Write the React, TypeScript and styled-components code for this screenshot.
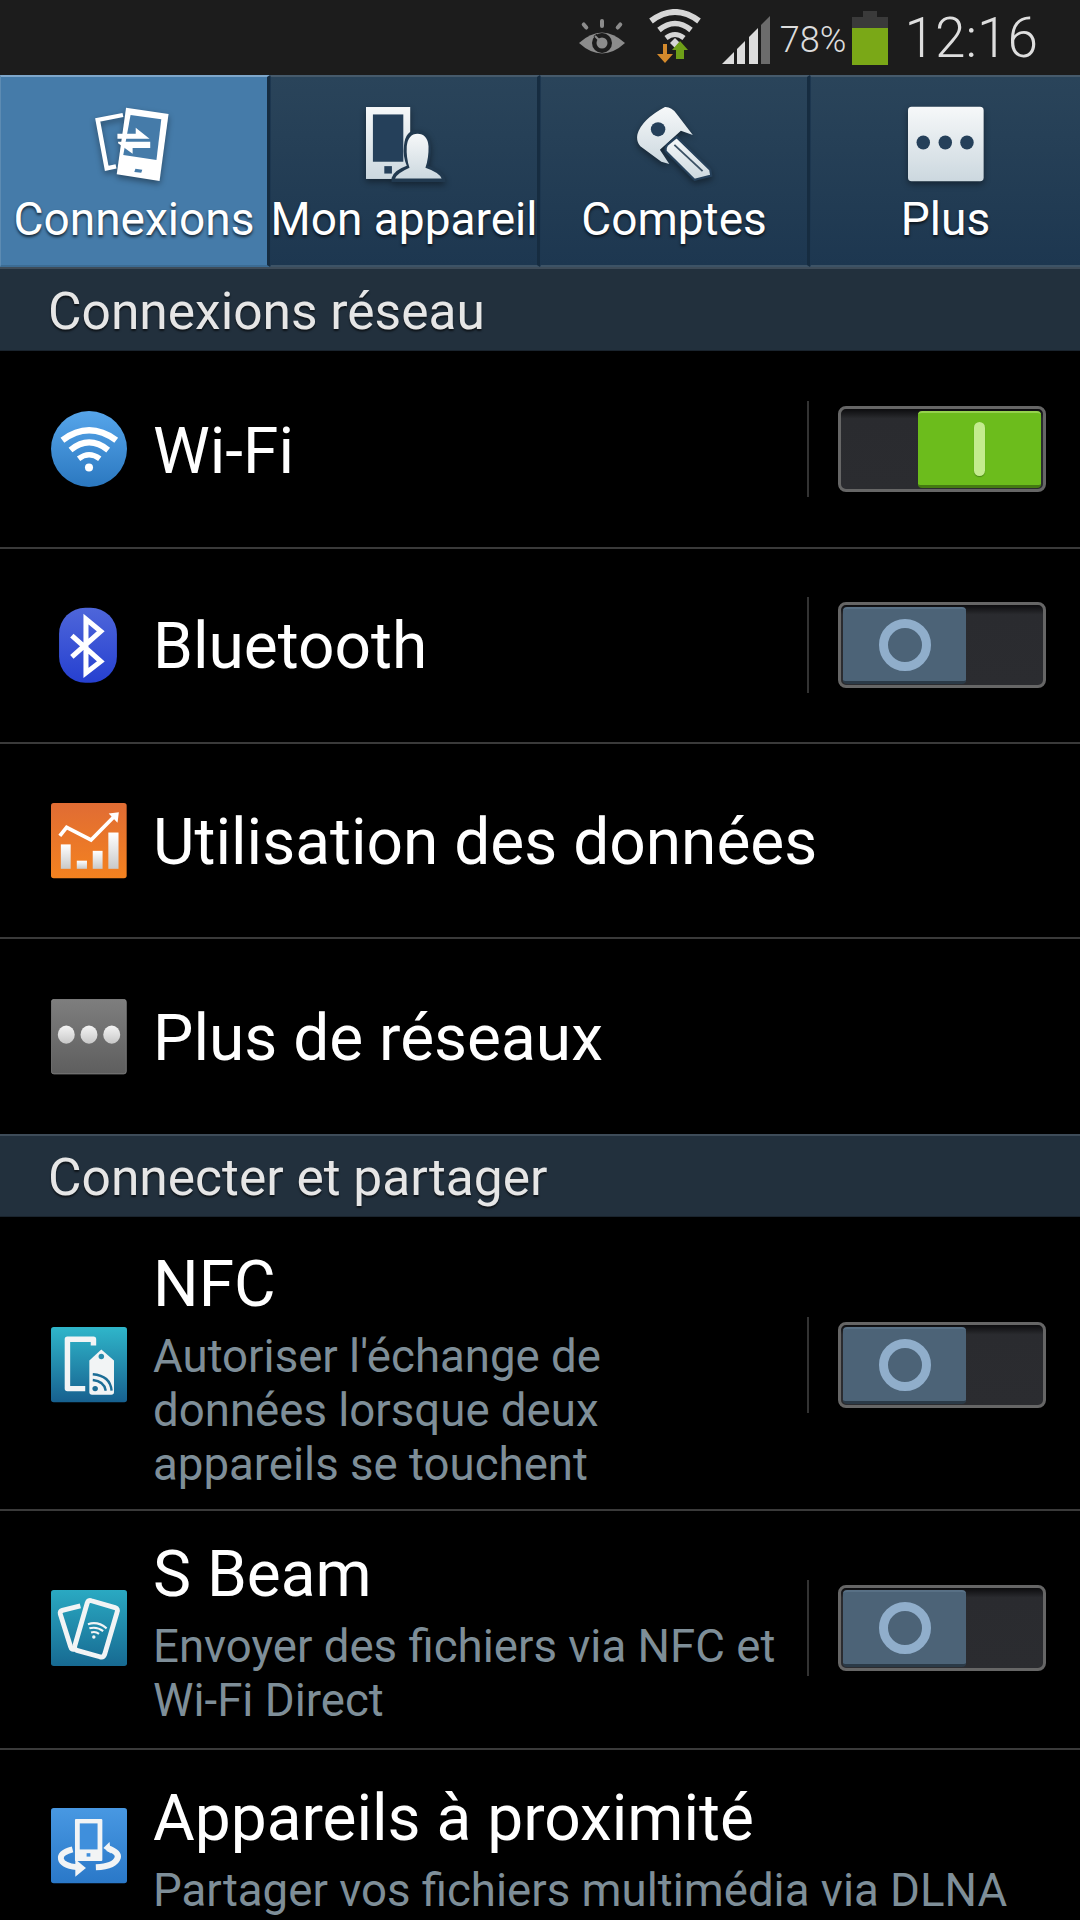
import React from 'react';
import styled, { createGlobalStyle } from 'styled-components';

const GlobalStyle = createGlobalStyle`
    html, body {
        margin: 0;
        padding: 0;
        background: #000;
    }
    * {
        box-sizing: border-box;
    }
`;

const tabs = [
    { label: 'Connexions', icon: 'connections', active: true },
    { label: 'Mon appareil', icon: 'device', active: false },
    { label: 'Comptes', icon: 'accounts', active: false },
    { label: 'Plus', icon: 'more', active: false },
];

const TabGradient = () => (
    <linearGradient id="tabIcon" x1="0" y1="0" x2="0" y2="1">
        <stop offset="0" stopColor="#f6f8f9" />
        <stop offset="1" stopColor="#ccd8df" />
    </linearGradient>
);

const ConnectionsIcon = () => (
    <TabSvg viewBox="278 100 220 228" preserveAspectRatio="none">
        <path d="M356 127 L283 142 L309 287 L336 281" fill="none" stroke="#fff" strokeWidth="13" />
        <path d="M365 105 L488 124 L462 325 L338 305 Z" fill="#fff" />
        <path d="M378 127 L467 140 L453 262 L357 247 Z" fill="#457ba9" />
        <path d="M392 288 L412 291 L409 300 L389 298 Z" fill="#457ba9" />
        <path d="M340 183 L393 183 L393 165 L433 198 L340 198 Z" fill="#fff" />
        <path d="M435 207 L435 226 L384 226 L384 243 L342 212 L342 207 Z" fill="#fff" />
    </TabSvg>
);

const DeviceIcon = () => (
    <TabSvg viewBox="1060 105 220 225" preserveAspectRatio="none">
        <defs><TabGradient /></defs>
        <rect x="1060" y="108" width="128" height="213" fill="url(#tabIcon)" />
        <rect x="1080" y="130" width="88" height="140" fill="#25405a" />
        <rect x="1113" y="283" width="22" height="22" fill="#25405a" />
        <path d="M1134 330 L1134 318 Q1140 296 1178 282 Q1166 255 1170 222 Q1174 176 1208 176 Q1244 176 1248 222 Q1250 255 1240 282 Q1290 296 1290 330 Z" fill="#21394f" />
        <path d="M1144 320 Q1150 304 1186 288 Q1176 258 1178 224 Q1182 187 1209 187 Q1238 187 1241 224 Q1242 258 1232 288 Q1272 302 1279 320 Z" fill="url(#tabIcon)" />
    </TabSvg>
);

const AccountsIcon = () => (
    <TabSvg viewBox="280 108 210 215" preserveAspectRatio="none">
        <defs><TabGradient /></defs>
        <path d="M360 111 Q378 110 392 130 L437 190 L404 178 L346 232 L372 272 L350 266 L292 222 Q280 208 284 188 Q296 146 360 111 Z" fill="url(#tabIcon)" />
        <circle cx="341" cy="174" r="20" fill="#25405a" />
        <path d="M392 196 L485 288 L488 305 L442 317 L362 236 Q360 226 366 218 Z" fill="url(#tabIcon)" stroke="#25405a" strokeWidth="6" />
        <path d="M386 218 L464 292" stroke="#3a5064" strokeWidth="5" />
    </TabSvg>
);

const MoreIcon = () => (
    <TabSvg viewBox="1070 110 214 204" preserveAspectRatio="none">
        <defs><TabGradient /></defs>
        <rect x="1070" y="112" width="213" height="200" rx="10" fill="url(#tabIcon)" />
        <circle cx="1113" cy="208" r="19" fill="#25405a" />
        <circle cx="1175" cy="208" r="19" fill="#25405a" />
        <circle cx="1236" cy="208" r="19" fill="#25405a" />
    </TabSvg>
);

const tabIcons: Record<string, React.ReactNode> = {
    connections: <ConnectionsIcon />,
    device: <DeviceIcon />,
    accounts: <AccountsIcon />,
    more: <MoreIcon />,
};

const StatusIcons = () => (
    <StatusBar>
        <EyeSvg viewBox="0 0 46 36">
            <g fill="#8c8c8c">
                <path d="M0 24 Q23 3 46 24 Q23 45 0 24 Z" />
                <rect x="21" y="0" width="4" height="9" rx="2" />
                <rect x="4" y="3" width="4" height="8" rx="2" transform="rotate(-40 6 7)" />
                <rect x="38" y="3" width="4" height="8" rx="2" transform="rotate(40 40 7)" />
            </g>
            <circle cx="23" cy="24" r="10" fill="#1c1c1c" />
            <path d="M23 24 L16 16" stroke="#1c1c1c" strokeWidth="4" />
            <circle cx="23" cy="24" r="5.5" fill="#8c8c8c" />
            <path d="M22 23 L16 17" stroke="#8c8c8c" strokeWidth="2" />
        </EyeSvg>
        <WifiSvg viewBox="0 0 54 56">
            <g fill="none" stroke="#d6d6d6">
                <path d="M3 12 Q27 -6 51 12" strokeWidth="6" />
                <path d="M11 21 Q27 8 43 21" strokeWidth="5.5" />
                <path d="M18 29 Q27 22 36 29" strokeWidth="5" />
            </g>
            <path d="M22 34 L27 29 L32 34 L27 39 Z" fill="#d6d6d6" />
            <path d="M15 35 H19 V45 H25 L17 54 L9 45 H15 Z" fill="#d48a2c" />
            <path d="M32 32 L40 41 H36 V50 H28 V41 H24 Z" fill="#6e9f18" />
        </WifiSvg>
        <SignalSvg viewBox="0 0 48 48">
            <path d="M0 48 L12 36 V48 Z" fill="#dcdcdc" />
            <path d="M15 33 L23 25 V48 H15 Z" fill="#dcdcdc" />
            <path d="M27 21 L36 12 V48 H27 Z" fill="#dcdcdc" />
            <path d="M39 9 L48 0 V48 H39 Z" fill="#6c6c6c" />
        </SignalSvg>
        <BatteryPercent>78%</BatteryPercent>
        <Battery>
            <BatteryCap />
            <BatteryBody>
                <BatteryLevel $level={77} />
            </BatteryBody>
        </Battery>
        <Clock>12:16</Clock>
    </StatusBar>
);

const Toggle = ({ on }: { on: boolean }) => (
    <ToggleZone>
        <ToggleTrack $on={on}>
            <ToggleThumb $on={on}>{on ? <OnBar /> : <OffRing />}</ToggleThumb>
        </ToggleTrack>
    </ToggleZone>
);

const iconGrad = (id: string, top: string, bottom: string) => (
    <defs>
        <linearGradient id={id} x1="0" y1="0" x2="0" y2="1">
            <stop offset="0" stopColor={top} />
            <stop offset="1" stopColor={bottom} />
        </linearGradient>
    </defs>
);

const WifiIcon = () => (
    <ListSvg viewBox="64 64 226 226">
        {iconGrad('wifiBg', '#56a5ea', '#2b78c0')}
        <circle cx="177" cy="177" r="113" fill="url(#wifiBg)" />
        <g fill="none" stroke="#fff">
            <path d="M98 151 Q177 92 258 151" strokeWidth="19" />
            <path d="M122 180 Q177 135 234 180" strokeWidth="18" />
            <path d="M146 206 Q177 182 209 206" strokeWidth="16" />
        </g>
        <circle cx="177" cy="232" r="12" fill="#fff" />
    </ListSvg>
);

const BluetoothIcon = () => (
    <ListSvg viewBox="64 650 226 226">
        {iconGrad('btBg', '#4e66da', '#2640d0')}
        <rect x="88" y="652" width="172" height="223" rx="78" fill="url(#btBg)" />
        <path d="M126 735 L212 812 L168 846 V686 L212 722 L126 798" fill="none" stroke="#fff" strokeWidth="15" />
    </ListSvg>
);

const DataIcon = () => (
    <ListSvg viewBox="62 66 224 224">
        {iconGrad('dataBg', '#e06c34', '#f4821f')}
        {iconGrad('barBg', '#ffffff', '#c9c9c9')}
        <rect x="62" y="66" width="223" height="222" rx="8" fill="url(#dataBg)" />
        <g fill="url(#barBg)">
            <rect x="91" y="188" width="29" height="72" />
            <rect x="138" y="236" width="30" height="24" />
            <rect x="185" y="207" width="29" height="53" />
            <rect x="231" y="153" width="30" height="107" />
        </g>
        <path d="M88 163 L108 138 L180 175 L246 108" fill="none" stroke="#fff" strokeWidth="11" />
        <path d="M232 97 L262 93 L258 124 Z" fill="#fff" />
    </ListSvg>
);

const MoreNetworksIcon = () => (
    <ListSvg viewBox="62 66 224 224">
        {iconGrad('moreBg', '#7e7e7e', '#5e5e5e')}
        {iconGrad('dotBg', '#f4f4f4', '#c8c8c8')}
        <rect x="63" y="67" width="221" height="220" rx="8" fill="url(#moreBg)" stroke="#8e8e8e" strokeWidth="2" />
        <ellipse cx="107" cy="171" rx="25" ry="27" fill="url(#dotBg)" />
        <ellipse cx="174" cy="171" rx="25" ry="27" fill="url(#dotBg)" />
        <ellipse cx="241" cy="171" rx="25" ry="27" fill="url(#dotBg)" />
    </ListSvg>
);

const NfcIcon = () => (
    <ListSvg viewBox="63 82 222 222">
        {iconGrad('nfcBg', '#2fb6ca', '#17608f')}
        <rect x="63" y="82" width="222" height="220" rx="8" fill="url(#nfcBg)" />
        <path d="M163 262 H111 V118 H187 V136" fill="none" stroke="#f2f4f5" strokeWidth="16" strokeLinejoin="round" />
        <path d="M175 180 L210 148 L247 180 V272 Q247 280 239 280 H183 Q175 280 175 272 Z" fill="#f2f4f5" />
        <circle cx="210" cy="168" r="8" fill="#2a8bab" />
        <g fill="none" stroke="#1c6d96" strokeWidth="7">
            <path d="M185 220 Q236 224 240 268" />
            <path d="M185 237 Q218 240 223 268" />
        </g>
        <circle cx="192" cy="262" r="8" fill="#1c6d96" />
    </ListSvg>
);

const SBeamIcon = () => (
    <ListSvg viewBox="67 67 220 220">
        {iconGrad('beamBg', '#2aa9c2', '#176a92')}
        <rect x="67" y="67" width="220" height="220" rx="8" fill="url(#beamBg)" />
        <path d="M152 113 L100 126 Q92 129 94 137 L124 232 Q126 240 134 238" fill="none" stroke="#f2f4f5" strokeWidth="14" />
        <path d="M184 98 L252 118 Q262 122 258 132 L222 254 Q218 264 208 260 L142 242 Q132 238 136 228 L172 104 Q175 95 184 98 Z" fill="none" stroke="#f2f4f5" strokeWidth="14" />
        <g fill="none" stroke="#f2f4f5" strokeWidth="6">
            <path d="M174 166 Q202 156 228 178" />
            <path d="M178 178 Q200 172 218 186" />
            <path d="M183 190 Q196 186 206 194" />
        </g>
        <circle cx="191" cy="203" r="5" fill="#f2f4f5" />
    </ListSvg>
);

const ProximityIcon = () => (
    <ListSvg viewBox="63 55 222 222">
        {iconGrad('proxBg', '#4898e2', '#2a78c8')}
        <rect x="63" y="55" width="222" height="220" rx="8" fill="url(#proxBg)" />
        <rect x="133" y="87" width="80" height="123" rx="3" fill="#f2f4f5" />
        <rect x="147" y="100" width="52" height="76" fill="#3f8fdc" />
        <rect x="167" y="187" width="11" height="10" fill="#3f8fdc" />
        <path d="M126 176 Q88 186 92 204 Q96 222 138 228" fill="none" stroke="#f2f4f5" strokeWidth="17" />
        <path d="M134 205 L165 230 L134 256 Z" fill="#f2f4f5" />
        <path d="M228 172 Q262 184 258 200 Q250 226 194 228" fill="none" stroke="#f2f4f5" strokeWidth="18" />
        <path d="M234 154 L216 172 L238 188 Z" fill="#f2f4f5" />
    </ListSvg>
);

const App = () => {
    return (
        <Screen>
            <GlobalStyle />
            <StatusIcons />
            <TabBar>
                {tabs.map((tab) => (
                    <Tab key={tab.label} $active={tab.active}>
                        <TabIconSlot>{tabIcons[tab.icon]}</TabIconSlot>
                        <TabLabel>{tab.label}</TabLabel>
                    </Tab>
                ))}
            </TabBar>

            <SectionHeader $height={84}>Connexions réseau</SectionHeader>
            <Row $height={198}>
                <IconSlot><WifiIcon /></IconSlot>
                <RowText><Title>Wi-Fi</Title></RowText>
                <Toggle on />
            </Row>
            <Row $height={195} $bottom={2}>
                <IconSlot><BluetoothIcon /></IconSlot>
                <RowText><Title>Bluetooth</Title></RowText>
                <Toggle on={false} />
            </Row>
            <Row $height={195}>
                <IconSlot><DataIcon /></IconSlot>
                <RowText><Title>Utilisation des données</Title></RowText>
            </Row>
            <Row $height={195} $last>
                <IconSlot><MoreNetworksIcon /></IconSlot>
                <RowText><Title>Plus de réseaux</Title></RowText>
            </Row>

            <SectionHeader $height={83}>Connecter et partager</SectionHeader>
            <Row $height={294} $top={4}>
                <IconSlot><NfcIcon /></IconSlot>
                <RowText $offset={10}>
                    <Title>NFC</Title>
                    <Subtitle>Autoriser l'échange de<br />données lorsque deux<br />appareils se touchent</Subtitle>
                </RowText>
                <Toggle on={false} />
            </Row>
            <Row $height={239} $bottom={4}>
                <IconSlot><SBeamIcon /></IconSlot>
                <RowText $offset={12}>
                    <Title>S Beam</Title>
                    <Subtitle>Envoyer des fichiers via NFC et<br />Wi-Fi Direct</Subtitle>
                </RowText>
                <Toggle on={false} />
            </Row>
            <Row $height={192} $last>
                <IconSlot><ProximityIcon /></IconSlot>
                <RowText $offset={9}>
                    <Title>Appareils à proximité</Title>
                    <Subtitle>Partager vos fichiers multimédia via DLNA</Subtitle>
                </RowText>
            </Row>
        </Screen>
    );
};

const Screen = styled.div`
    width: 1080px;
    height: 1920px;
    overflow: hidden;
    background: #000;
    font-family: Roboto, "Liberation Sans", sans-serif;
    color: #fff;
`;

const StatusBar = styled.div`
    height: 75px;
    background: #1c1c1c;
    display: flex;
    align-items: flex-start;
    padding-right: 42px;
    justify-content: flex-end;
`;

const EyeSvg = styled.svg`
    width: 46px;
    height: 36px;
    margin-top: 19px;
    margin-right: 23px;
`;

const WifiSvg = styled.svg`
    width: 54px;
    height: 56px;
    margin-top: 9px;
    margin-right: 20px;
`;

const SignalSvg = styled.svg`
    width: 48px;
    height: 48px;
    margin-top: 16px;
    margin-right: 10px;
`;

const BatteryPercent = styled.span`
    font-size: 36px;
    line-height: 36px;
    font-weight: 300;
    color: #dcdcdc;
    margin-top: 22px;
    margin-right: 6px;
`;

const Battery = styled.div`
    width: 36px;
    height: 54px;
    margin-top: 11px;
    margin-right: 16px;
    display: flex;
    flex-direction: column;
    align-items: center;
`;

const BatteryCap = styled.div`
    width: 14px;
    height: 6px;
    background: #3a3a3a;
`;

const BatteryBody = styled.div`
    flex: 1;
    width: 100%;
    background: #3a3a3a;
    display: flex;
    align-items: flex-end;
`;

const BatteryLevel = styled.div<{ $level: number }>`
    width: 100%;
    height: ${({ $level }) => $level}%;
    background: #7aa817;
`;

const Clock = styled.span`
    font-size: 55px;
    line-height: 60px;
    font-weight: 300;
    color: #dedede;
    margin-top: 8px;
`;

const TabBar = styled.div`
    display: grid;
    grid-template-columns: repeat(4, 270px);
    height: 192px;
`;

const Tab = styled.div<{ $active: boolean }>`
    display: flex;
    flex-direction: column;
    align-items: center;
    background: ${({ $active }) =>
        $active ? '#457ba9' : 'linear-gradient(#2a445a, #1d3750)'};
    border-top: 2px solid ${({ $active }) => ($active ? '#7ea7cb' : '#465a6b')};
    border-bottom: 2px solid ${({ $active }) => ($active ? '#3c6c94' : '#3d5366')};
    border-right: 3px solid #162c40;
    border-left: 1px solid ${({ $active }) => ($active ? '#5d8bb2' : '#1d3750')};
    &:last-child {
        border-right: none;
    }
`;

const TabIconSlot = styled.div`
    height: 80px;
    margin-top: 27px;
    display: flex;
    align-items: center;
    justify-content: center;
`;

const TabSvg = styled.svg`
    width: 76px;
    height: 76px;
    overflow: visible;
    filter: drop-shadow(0 3px 3px rgba(0, 0, 0, 0.4));
`;

const TabLabel = styled.span`
    font-size: 46px;
    line-height: 50px;
    margin-top: 10px;
    white-space: nowrap;
    color: #fff;
    text-shadow: 0 2px 3px rgba(0, 0, 0, 0.7);
`;

const SectionHeader = styled.div<{ $height: number }>`
    height: ${({ $height }) => $height}px;
    background: #22303d;
    border-top: 2px solid #3e4c59;
    border-bottom: 1px solid #1a242e;
    padding: 3px 0 0 48px;
    display: flex;
    align-items: center;
    font-size: 51.5px;
    font-weight: 400;
    color: #e6e6e6;
    text-shadow: 0 2px 2px rgba(0, 0, 0, 0.6);
`;

const Row = styled.div<{ $height: number; $last?: boolean; $top?: number; $bottom?: number }>`
    height: ${({ $height }) => $height}px;
    flex: none;
    display: flex;
    align-items: center;
    padding: ${({ $top }) => $top ?? 0}px 34px ${({ $bottom }) => $bottom ?? 0}px 51px;
    border-bottom: ${({ $last }) => ($last ? 'none' : '2px solid #3a3a3a')};
`;

const IconSlot = styled.div`
    width: 76px;
    height: 76px;
    flex: none;
    margin-right: 26px;
`;

const ListSvg = styled.svg`
    display: block;
    width: 76px;
    height: 76px;
`;

const RowText = styled.div<{ $offset?: number }>`
    flex: 1;
    min-width: 0;
    padding-top: ${({ $offset }) => $offset ?? 5}px;
`;

const Title = styled.div`
    font-size: 64px;
    line-height: 72px;
    font-weight: 400;
    color: #fff;
    white-space: nowrap;
`;

const Subtitle = styled.div`
    font-size: 45.6px;
    line-height: 54px;
    font-weight: 400;
    margin-top: 9px;
    color: #7e8e98;
    white-space: nowrap;
`;

const ToggleZone = styled.div`
    flex: none;
    height: 96px;
    border-left: 2px solid #333;
    padding-left: 29px;
    display: flex;
    align-items: center;
`;

const ToggleTrack = styled.div<{ $on: boolean }>`
    width: 208px;
    height: 86px;
    border: 3px solid #666;
    border-radius: 8px;
    background: linear-gradient(#0c0c0e, #2a2b2f 12%, #2b2c30);
    padding: 2px;
    display: flex;
    justify-content: ${({ $on }) => ($on ? 'flex-end' : 'flex-start')};
`;

const ToggleThumb = styled.div<{ $on: boolean }>`
    width: 123px;
    height: 77px;
    border-radius: 4px;
    display: flex;
    align-items: center;
    justify-content: center;
    background: ${({ $on }) => ($on ? '#6cbc1c' : '#4c6377')};
    border-top: 2px solid ${({ $on }) => ($on ? '#95d34c' : '#587085')};
    border-bottom: 3px solid ${({ $on }) => ($on ? '#447a12' : '#2b3a47')};
`;

const OnBar = styled.div`
    width: 11px;
    height: 54px;
    border-radius: 6px;
    background: #c4ec8e;
    box-shadow: 0 1px 1px #4a8a14;
`;

const OffRing = styled.div`
    width: 52px;
    height: 52px;
    border-radius: 50%;
    border: 9px solid #90aecb;
`;

export default App;
